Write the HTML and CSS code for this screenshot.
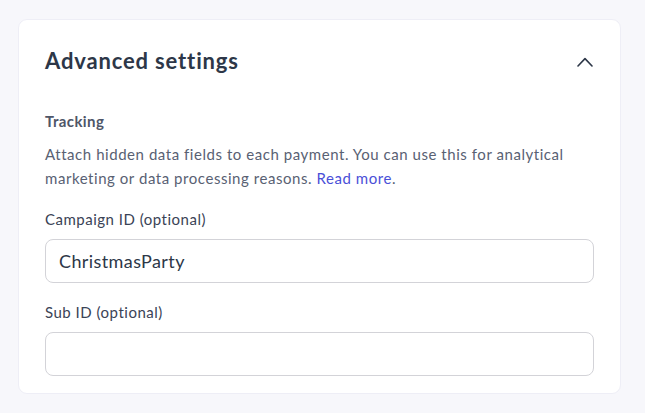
FILE: index.html
```html
<!DOCTYPE html>
<html lang="en">
<head>
<meta charset="utf-8">
<title>Advanced settings</title>
<link rel="stylesheet" href="styles.css">
</head>
<body>
  <section class="card">
    <header class="card-header">
      <h2 class="card-title">Advanced settings</h2>
      <button class="toggle" type="button" aria-label="Collapse">
        <svg width="16" height="10" viewBox="0 0 16 10" fill="none" stroke="#2d3748" stroke-width="1.6" stroke-linecap="round" stroke-linejoin="round"><path d="M1 9 L8 1.6 L15 9"/></svg>
      </button>
    </header>
    <h3 class="section-title">Tracking</h3>
    <p class="section-desc">Attach hidden data fields to each payment. You can use this for analytical marketing or data processing reasons. <a href="#" class="link">Read more</a>.</p>
    <label class="field">
      <span class="field-label">Campaign ID (optional)</span>
      <input class="field-input" type="text" value="ChristmasParty">
    </label>
    <label class="field">
      <span class="field-label">Sub ID (optional)</span>
      <input class="field-input" type="text" value="">
    </label>
  </section>
</body>
</html>
```
FILE: styles.css
```css
html, body {
  margin: 0;
  padding: 0;
}
body {
  background: #f7f7fb;
  font-family: Lato, "Open Sans", sans-serif;
  color: #2d3748;
  padding: 19px 0 0 18px;
}
.card {
  width: 549px;
  background: #ffffff;
  border: 1px solid #eeeef6;
  border-radius: 9px;
  padding: 27px 26px 17px 26px;
  display: flex;
  flex-direction: column;
}
.card-header {
  display: flex;
  align-items: center;
  justify-content: space-between;
  height: 28px;
}
.card-title {
  margin: 0;
  font-size: 22px;
  line-height: 28px;
  font-weight: 700;
  letter-spacing: 0.85px;
  color: #2d3748;
}
.toggle {
  background: none;
  border: 0;
  padding: 0;
  margin-right: 1px;
  margin-top: 2px;
  display: flex;
  width: 16px;
  height: 10px;
}
.section-title {
  margin: 36px 0 0 0;
  font-size: 15px;
  line-height: 20px;
  font-weight: 700;
  letter-spacing: 0.4px;
  color: #4f5668;
}
.section-desc {
  margin: 11px 0 0 0;
  font-size: 15px;
  line-height: 24px;
  letter-spacing: 0.55px;
  color: #596173;
}
.link {
  color: #4a4fd8;
  text-decoration: none;
}
.field {
  display: flex;
  flex-direction: column;
  margin-top: 19px;
}
.field-label {
  font-size: 15px;
  line-height: 20px;
  letter-spacing: 0.5px;
  color: #3a4356;
  margin-bottom: 10px;
}
.field-input {
  box-sizing: border-box;
  height: 44px;
  width: 100%;
  border: 1px solid #d3d3d8;
  border-radius: 8px;
  padding: 0 13px;
  font-family: inherit;
  font-size: 18px;
  letter-spacing: 0.4px;
  color: #2d3748;
  background: #fff;
  outline: none;
}
```
